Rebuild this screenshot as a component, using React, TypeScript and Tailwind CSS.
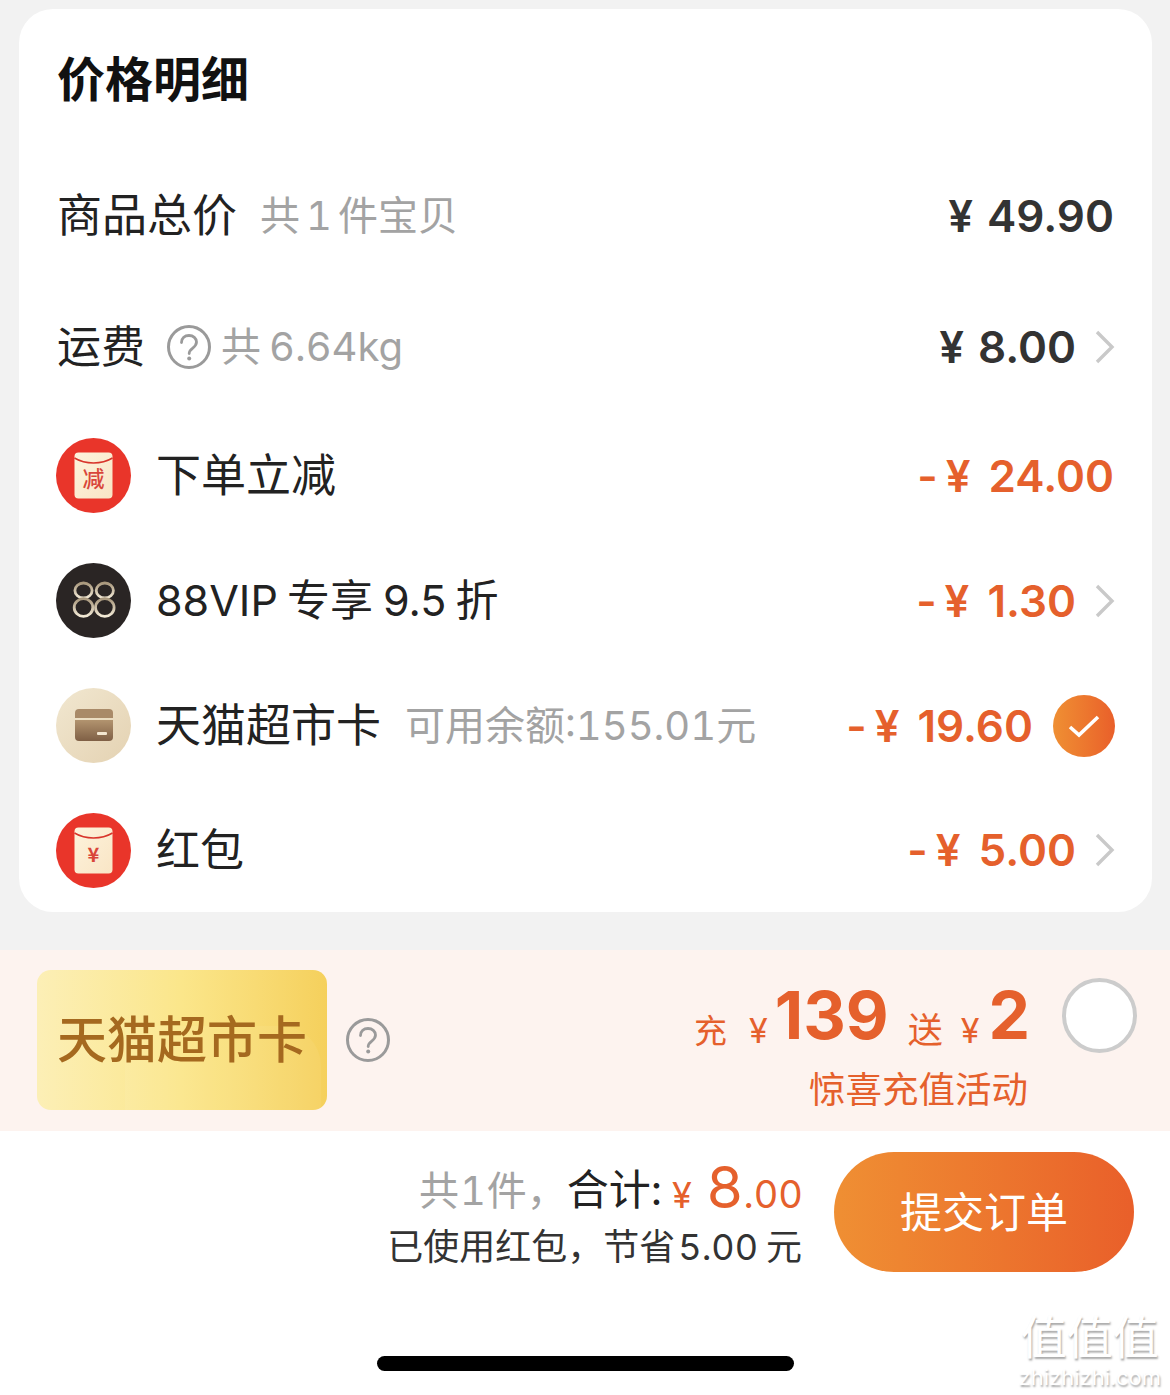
import type { ReactNode } from 'react';

const Help = ({ className }: { className: string }) => (
  <svg viewBox="0 0 44 44" className={className} fill="none">
    <circle cx="22" cy="22" r="20.5" stroke="#9a9a9a" strokeWidth="3" />
    <path d="M14.5 17.5c0-4.4 3.3-7 7.5-7s7.500 2.700 7.500 6.600c0 3-1.700 4.500-4 6.200-2 1.500-3.300 2.600-3.300 5.200" stroke="#9a9a9a" strokeWidth="2.800" strokeLinecap="round" />
    <circle cx="22.2" cy="33.5" r="2" fill="#9a9a9a" />
  </svg>
);

const Chevron = () => (
  <svg viewBox="0 0 20 34" className="ml-[19px] h-[34px] w-[20px]" fill="none">
    <path d="M2 2l15 15L2 32" stroke="#c9c9c9" strokeWidth="3.400" />
  </svg>
);

const Envelope = ({ mark }: { mark: string }) => (
  <svg viewBox="0 0 75 75" className="h-[75px] w-[75px] shrink-0">
    <defs>
      <linearGradient id={`env-${mark}`} x1="0" y1="0" x2="1" y2="1">
        <stop offset="0" stopColor="#fdf3dc" />
        <stop offset="1" stopColor="#f9e5c5" />
      </linearGradient>
    </defs>
    <circle cx="37.5" cy="37.5" r="37.5" fill="#e9352a" />
    <rect x="18.5" y="14.5" width="38" height="46" rx="4" fill={`url(#env-${mark})`} />
    <path d="M18.5 20c6 3.600 12 5 19 5s13-1.400 19-5" fill="none" stroke="#d8352b" strokeWidth="1.500" />
    <text x="37.500" y="49" textAnchor="middle" fontSize={mark === '减' ? 22 : 20} fontWeight={mark === '减' ? 500 : 700} fill="#d9463a" fontFamily="'Noto Sans CJK SC', sans-serif">
      {mark}
    </text>
  </svg>
);

const Vip = () => (
  <svg viewBox="0 0 75 75" className="h-[75px] w-[75px] shrink-0" fill="none">
    <defs>
      <linearGradient id="vip" x1="0" y1="0" x2="0" y2="1">
        <stop offset="0" stopColor="#a8977c" />
        <stop offset="1" stopColor="#f3ead6" />
      </linearGradient>
    </defs>
    <circle cx="37.5" cy="37.5" r="37.5" fill="#2a2524" />
    {[27.5, 48.8].map((x) => (
      <g key={x} stroke="url(#vip)" strokeWidth="2.800">
        <ellipse cx={x} cy="27.5" rx="8.600" ry="7.500" />
        <ellipse cx={x} cy="44.500" rx="9.300" ry="8.800" />
      </g>
    ))}
  </svg>
);

const CardIcon = () => (
  <svg viewBox="0 0 75 75" className="h-[75px] w-[75px] shrink-0">
    <defs>
      <linearGradient id="tan" x1="0" y1="0" x2="1" y2="1">
        <stop offset="0" stopColor="#f1e7d0" />
        <stop offset="1" stopColor="#e4d2b2" />
      </linearGradient>
      <linearGradient id="cardBody" x1="0" y1="0" x2="0" y2="1">
        <stop offset="0" stopColor="#b2946f" />
        <stop offset="1" stopColor="#7f5f45" />
      </linearGradient>
    </defs>
    <circle cx="37.5" cy="37.5" r="37.5" fill="url(#tan)" />
    <path d="M19 25a4 4 0 0 1 4-4h30a4 4 0 0 1 4 4v5H19z" fill="#a98a68" />
    <path d="M19 32h38v17a4 4 0 0 1-4 4H23a4 4 0 0 1-4-4z" fill="url(#cardBody)" />
    <rect x="41" y="44" width="10" height="3" rx="1" fill="#f3e6d0" />
  </svg>
);

const Row = ({ icon, h, children, right }: { icon?: ReactNode; h: string; children: ReactNode; right: ReactNode }) => (
  <div className={`flex items-center justify-between ${h}`}>
    <div className="flex items-center">
      {icon && <div className="mr-[25px] -ml-px">{icon}</div>}
      {children}
    </div>
    <div className="flex items-center">{right}</div>
  </div>
);

const Price = ({ amount, off }: { amount: string; off?: boolean }) => (
  <span className={`flex items-center text-[44px] font-semibold proportional-nums ${off ? 'text-[#e5602c]' : 'text-[#333333]'}`}>
    {off && <span className="mr-[8px]">-</span>}
    <span>¥</span>
    <span className={off ? 'ml-[18px]' : 'ml-[14px]'}>{amount}</span>
  </span>
);

export default function App() {
  return (
    <div className="flex h-[1395px] w-[1170px] flex-col overflow-hidden bg-[#f2f2f2] font-[family-name:Inter,'Noto_Sans_CJK_SC',sans-serif] tabular-nums text-[#222222]">
      <div className="mx-[19px] mt-[9px] h-[903px] w-[1133px] shrink-0 rounded-[34px] bg-white pl-[38px] pr-[37px]">
        <div className="flex h-[142px] items-center text-[48px] font-semibold text-[#111111]">价格明细</div>

        <Row h="h-[129px]" right={<span className="mr-[1px]"><Price amount="49.90" /></span>}>
          <span className="text-[45px]">商品总价</span>
          <span className="ml-[23px] flex text-[40px] text-[#a3a3a3]">
            共<span className="mx-[6px]">1</span>件宝贝
          </span>
        </Row>

        <Row
          h="h-[133px]"
          right={
            <>
              <Price amount="8.00" />
              <Chevron />
            </>
          }
        >
          <span className="text-[44px]">运费</span>
          <Help className="ml-[22px] h-[44px] w-[44px]" />
          <span className="ml-[10px] flex text-[40px] text-[#a3a3a3]">
            共<span className="ml-[8px]">6.64kg</span>
          </span>
        </Row>

        <Row h="h-[125px]" icon={<Envelope mark="减" />} right={<span className="mr-[1px]"><Price off amount="24.00" /></span>}>
          <span className="text-[45px]">下单立减</span>
        </Row>

        <Row
          h="h-[125px]"
          icon={<Vip />}
          right={
            <>
              <Price off amount="1.30" />
              <Chevron />
            </>
          }
        >
          <span className="flex text-[43px] proportional-nums">
            88VIP<span className="ml-[9px]">专享</span>
            <span className="ml-[10px]">9.5</span>
            <span className="ml-[9px]">折</span>
          </span>
        </Row>

        <Row
          h="h-[125px]"
          icon={<CardIcon />}
          right={
            <>
              <Price off amount="19.60" />
              <span className="ml-[20px] flex h-[62px] w-[62px] items-center justify-center rounded-full bg-gradient-to-r from-[#ef8f33] to-[#e95f2a]">
                <svg viewBox="0 0 32 24" className="h-[24px] w-[32px]" fill="none">
                  <path d="M2 13l9 8L30 3" stroke="#fff" strokeWidth="3.600" />
                </svg>
              </span>
            </>
          }
        >
          <span className="text-[45px]">天猫超市卡</span>
          <span className="ml-[24px] text-[40px] text-[#a3a3a3]">可用余额:155.01元</span>
        </Row>

        <Row
          h="h-[124px]"
          icon={<Envelope mark="¥" />}
          right={
            <>
              <Price off amount="5.00" />
              <Chevron />
            </>
          }
        >
          <span className="text-[44px]">红包</span>
        </Row>
      </div>

      <div className="mt-[38px] flex h-[181px] shrink-0 items-center justify-between bg-[#fdf3ef] pl-[37px] pr-[33px]">
        <div className="mb-[1px] flex items-center">
          <div className="relative flex h-[140px] w-[290px] items-center justify-center overflow-hidden rounded-[14px] bg-gradient-to-r from-[#fcefb6] via-[#fbe68a] to-[#f5d05c] text-[50px] font-medium text-[#a5691f]">
            <div className="absolute inset-y-0 left-[88px] right-[6px] top-[56px] rounded-tr-[40px] bg-white/5" />
            <span className="relative">天猫超市卡</span>
          </div>
          <Help className="ml-[19px] h-[44px] w-[44px]" />
        </div>
        <div className="flex items-start">
          <div className="flex flex-col items-end text-[#e5602c]">
            <div className="-mr-[2px] flex h-[90px] items-baseline pt-[10px] proportional-nums">
              <span className="translate-y-[4px] text-[33px]">充</span>
              <span className="ml-[22px] translate-y-[4px] text-[34px]">¥</span>
              <span className="ml-[7px] text-[66px] font-bold leading-[76px]">139</span>
              <span className="ml-[19px] translate-y-[4px] text-[35px]">送</span>
              <span className="ml-[18px] translate-y-[4px] text-[34px]">¥</span>
              <span className="ml-[9px] text-[66px] font-bold leading-[76px]">2</span>
            </div>
            <div className="mt-[8px] text-[36.5px] leading-[50px]">惊喜充值活动</div>
          </div>
          <div className="ml-[34px] mt-[11px] h-[75px] w-[75px] rounded-full border-[4px] border-[#cccccc] bg-white" />
        </div>
      </div>

      <div className="flex h-[264px] flex-col bg-white">
        <div className="mt-[21px] flex items-start justify-end pr-[36px]">
          <div className="mt-[5px] flex flex-col items-end">
            <div className="-mr-[1px] flex h-[60px] items-baseline leading-[60px]">
              <span className="flex -translate-y-[3px] text-[40px] text-[#a3a3a3]">
                共<span className="mx-[1px]">1</span>件，
              </span>
              <span className="-translate-y-[3px] text-[42px]">合计:</span>
              <span className="ml-[10px] text-[36px] text-[#e5602c]">¥</span>
              <span className="ml-[14px] text-[58px] leading-[60px] text-[#e5602c]">8</span>
              <span className="text-[38px] text-[#e5602c]">.00</span>
            </div>
            <div className="mt-[5px] flex text-[36px] leading-[50px] text-[#333333]">
              已使用红包，节省<span className="ml-[3px]">5.00</span>
              <span className="ml-[8px]">元</span>
            </div>
          </div>
          <div className="ml-[32px] flex h-[120px] w-[300px] items-center justify-center rounded-full bg-gradient-to-r from-[#ef8f33] to-[#e95f2a] text-[42px] text-white">
            提交订单
          </div>
        </div>
        <div className="relative mt-[84px] flex justify-center">
          <div className="ml-[1px] h-[15px] w-[417px] rounded-full bg-black" />
          <div className="absolute right-[9px] top-[-44px] flex flex-col items-center text-white [text-shadow:1px_2px_2px_#a8a8a8]">
            <span className="text-[46px] leading-[50px]">值值值</span>
            <span className="mt-[4px] text-[22px] leading-[22px]">zhizhizhi.com</span>
          </div>
        </div>
      </div>
    </div>
  );
}
